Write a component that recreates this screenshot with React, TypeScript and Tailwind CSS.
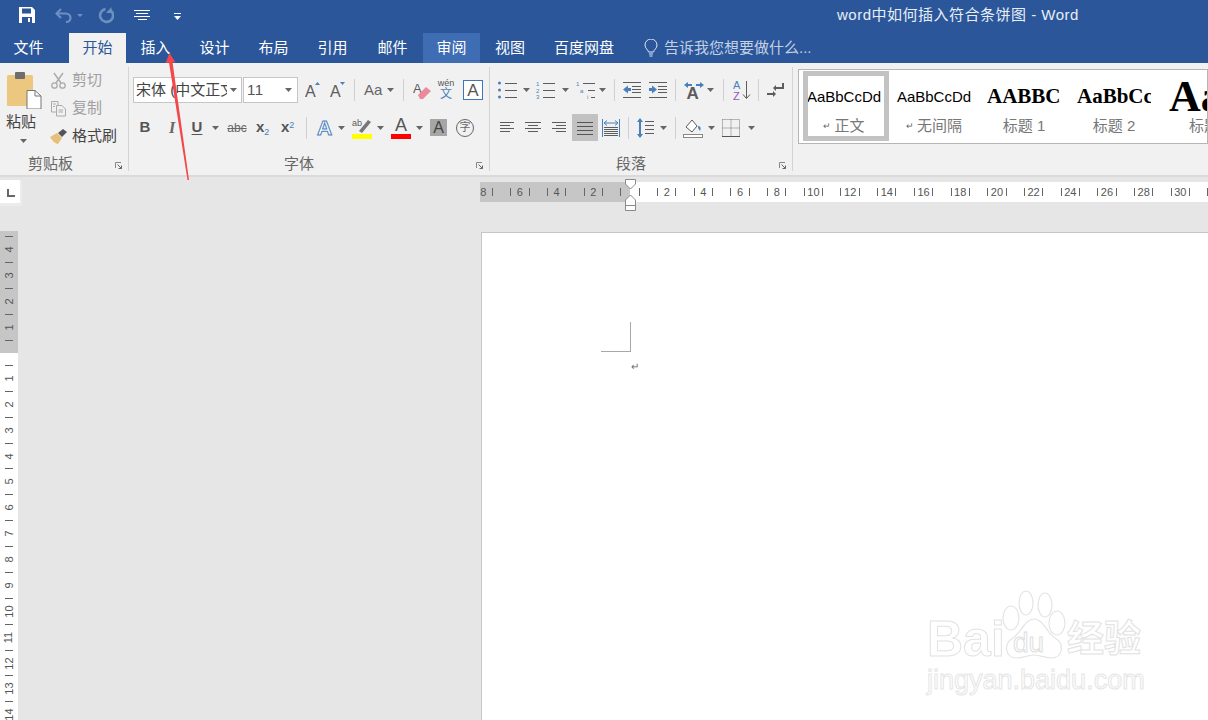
import type { ReactNode } from 'react'

// ---- small pieces -----------------------------------------------------------

const GRAY = '#5c5c5c'
const BLUE = '#4a7fbd'

function Ico({ w = 20, h = 20, className = '', children }: { w?: number, h?: number, className?: string, children: ReactNode }) {
  return (
    <svg width={w} height={h} viewBox={`0 0 ${w} ${h}`} fill="none" className={`shrink-0 ${className}`}>
      {children}
    </svg>
  )
}

function Caret({ className = '' }: { className?: string }) {
  return (
    <Ico w={7} h={4} className={className}>
      <path d="M0 0H7L3.5 4Z" fill="#666" />
    </Ico>
  )
}

function Sep({ className = '' }: { className?: string }) {
  return <span className={`shrink-0 w-px h-[22px] bg-[#d0d0d0] ${className}`} />
}

function Lines({ x, w, ys, color = GRAY }: { x: number | number[], w: number | number[], ys: number[], color?: string }) {
  return (
    <>
      {ys.map((y, i) => {
        const lx = Array.isArray(x) ? x[i] : x
        const lw = Array.isArray(w) ? w[i] : w
        return <rect key={i} x={lx} y={y} width={lw} height="1" fill={color} />
      })}
    </>
  )
}

function Launcher({ className = '' }: { className?: string }) {
  return (
    <Ico w={7} h={7} className={className}>
      <path d="M0.5 6V0.5H6" stroke="#888" />
      <path d="M2.5 2.5L6.5 6.5M6.5 3.5V6.5H3.5" stroke="#666" />
    </Ico>
  )
}

function GroupLabel({ children, className = '' }: { children: ReactNode, className?: string }) {
  return <span className={`text-[15px] leading-[16px] text-[#666] whitespace-nowrap ${className}`}>{children}</span>
}

// ---- title bar --------------------------------------------------------------

function TitleBar() {
  return (
    <div className="h-[33px] shrink-0 bg-[#2b579a] flex items-center">
      <Ico w={16} h={16} className="ml-[19px] -mt-[3px]">
        <path d="M0 0H13L16 3V16H0Z" fill="#fff" />
        <rect x="3" y="1.5" width="9" height="5" fill="#2b579a" />
        <rect x="3" y="10" width="10" height="6" fill="#2b579a" />
        <rect x="9" y="11" width="2" height="4" fill="#fff" />
      </Ico>
      <Ico w={17} h={15} className="ml-[20px] -mt-[3px]">
        <path d="M6 1L1.5 5.5L6 10" stroke="#6f8fbf" strokeWidth="2.2" />
        <path d="M2 5.5H10.5C14 5.5 15.5 8 15.5 10C15.5 12 14 14 11 14" stroke="#6f8fbf" strokeWidth="2.2" />
      </Ico>
      <Ico w={6} h={3} className="ml-[5px] -mt-[3px]">
        <path d="M0 0H6L3 3Z" fill="#6f8fbf" />
      </Ico>
      <Ico w={17} h={17} className="ml-[14px] -mt-[3px]">
        <path d="M13.5 3.2A6.5 6.5 0 1 1 8.5 2" stroke="#6f8fbf" strokeWidth="2.6" />
        <path d="M14.5 0V6H9" fill="#6f8fbf" />
      </Ico>
      <Ico w={16} h={11} className="ml-[20px] -mt-[3px]">
        <Lines x={[0, 2, 0, 4]} w={[16, 12, 16, 9]} ys={[0, 3, 6, 9]} color="#fff" />
      </Ico>
      <Ico w={7} h={7} className="ml-[24px] -mt-[1px]">
        <rect x="0" y="0" width="7" height="1" fill="#fff" />
        <path d="M0 3H7L3.5 7Z" fill="#fff" />
      </Ico>
      <span className="ml-[656px] -mt-[2px] text-[15px] tracking-[0.5px] text-[#e8eef7] whitespace-nowrap">word中如何插入符合条饼图 - Word</span>
    </div>
  )
}

// ---- tabs -------------------------------------------------------------------

function Tab({ label, className = 'w-[59px] text-white' }: { label: string, className?: string }) {
  return <div className={`h-full shrink-0 flex items-center justify-center text-[15px] ${className}`}>{label}</div>
}

function TabBar() {
  return (
    <div className="h-[30px] shrink-0 bg-[#2b579a] flex">
      <Tab label="文件" className="w-[57px] text-white" />
      <Tab label="开始" className="w-[57px] ml-[12px] bg-[#f1f1f1] text-[#2b579a]" />
      <Tab label="插入" />
      <Tab label="设计" />
      <Tab label="布局" />
      <Tab label="引用" />
      <Tab label="邮件" className="w-[61px] text-white" />
      <Tab label="审阅" className="w-[57px] bg-[#3e6db3] text-white" />
      <Tab label="视图" className="w-[60px] text-white" />
      <Tab label="百度网盘" className="w-[88px] text-white" />
      <div className="ml-[16px] flex items-center">
        <Ico w={14} h={18}>
          <path d="M4.5 13C4 10.5 1 9.5 1 6A6 6 0 0 1 13 6C13 9.5 10 10.5 9.5 13Z" stroke="#dfe7f2" />
          <path d="M5 15H9M5.5 17H8.5" stroke="#dfe7f2" />
        </Ico>
        <span className="ml-[6px] text-[15px] text-[#c3d0e4] whitespace-nowrap">告诉我您想要做什么...</span>
      </div>
    </div>
  )
}

// ---- clipboard group --------------------------------------------------------

function ClipboardGroup() {
  return (
    <div className="w-[128px] shrink-0 flex flex-col">
      <div className="flex h-[92px]">
        <div className="w-[50px] flex flex-col pl-[6px] pt-[8px]">
          <Ico w={36} h={38}>
            <rect x="1" y="4" width="26" height="31" rx="1.5" fill="#ecc77f" />
            <rect x="9" y="1" width="10" height="7" rx="1" fill="#6e6e6e" />
            <path d="M21 19.5H29L35 25V38H21Z" fill="#fff" stroke="#777" />
            <path d="M29 19.5V25H35" stroke="#777" />
          </Ico>
          <span className="mt-[3px] text-[15px] leading-[20px] text-[#444]">粘贴</span>
          <Caret className="mt-[7px] ml-[14px]" />
        </div>
        <div className="flex flex-col pt-[8px]">
          <div className="h-[18px] flex items-center">
            <Ico w={17} h={17}>
              <path d="M4 1L11 11M13 1L6 11" stroke="#aaa" strokeWidth="1.4" />
              <circle cx="4.5" cy="13.5" r="2.7" stroke="#aaa" strokeWidth="1.3" />
              <circle cx="12.5" cy="13.5" r="2.7" stroke="#aaa" strokeWidth="1.3" />
            </Ico>
            <span className="ml-[5px] text-[15px] text-[#a0a0a0]">剪切</span>
          </div>
          <div className="mt-[10px] h-[18px] flex items-center">
            <Ico w={17} h={17}>
              <path d="M1.5 1.5H8V12H1.5Z" stroke="#aaa" />
              <path d="M6.5 5.5H12L15.5 9V16H6.5Z" fill="#f1f1f1" stroke="#aaa" />
              <path d="M3 4H6M3 6.5H5M8.5 10H13M8.5 12H13" stroke="#aaa" />
            </Ico>
            <span className="ml-[5px] text-[15px] text-[#a0a0a0]">复制</span>
          </div>
          <div className="mt-[10px] h-[18px] flex items-center">
            <Ico w={17} h={15}>
              <path d="M0 8L7 4L12 9L8 15C5 15 2 11 0 8Z" fill="#e8bf78" />
              <path d="M8 4L13 0L17 3L12 8Z" fill="#555" />
            </Ico>
            <span className="ml-[5px] text-[15px] text-[#444]">格式刷</span>
          </div>
        </div>
      </div>
      <div className="flex items-center h-[16px] shrink-0 mt-[1px]">
        <GroupLabel className="ml-[28px]">剪贴板</GroupLabel>
        <Launcher className="ml-[42px] mt-[2px]" />
      </div>
    </div>
  )
}

// ---- font group -------------------------------------------------------------

function FontGroup() {
  return (
    <div className="w-[361px] shrink-0 flex flex-col border-l border-[#d4d4d4] my-[4px]">
      <div className="flex items-center h-[26px] shrink-0 mt-[10px]">
        <div className="ml-[4px] w-[109px] h-[26px] bg-white border border-[#c6c6c6] flex items-center overflow-hidden">
          <span className="w-[91px] ml-[2px] overflow-hidden whitespace-nowrap text-[15px] text-[#444]">宋体 (中文正文</span>
          <Caret className="ml-[3px]" />
        </div>
        <div className="w-[55px] ml-px h-[26px] bg-white border border-[#c6c6c6] flex items-center justify-between px-[3px]">
          <span className="text-[15px] tracking-[0.5px] text-[#555]">11</span>
          <Caret className="mr-[2px]" />
        </div>
        <Ico w={15} h={16} className="ml-[7px]">
          <text x="0" y="15" fontSize="16" fill={GRAY}>A</text>
          <path d="M10 3L12.5 0L15 3Z" fill={BLUE} />
        </Ico>
        <Ico w={15} h={16} className="ml-[10px]">
          <text x="0" y="15" fontSize="16" fill={GRAY}>A</text>
          <path d="M10 0H15L12.5 3Z" fill={BLUE} />
        </Ico>
        <Sep className="ml-[9px]" />
        <span className="ml-[9px] text-[15px] text-[#666] w-[18px]">Aa</span>
        <Caret className="ml-[5px]" />
        <Sep className="ml-[9px]" />
        <Ico w={18} h={19} className="ml-[9px]">
          <text x="0" y="12" fontSize="13" fill={GRAY}>A</text>
          <path d="M5 14L13 6L18 10L10 18H7Z" fill="#ec8a9a" />
        </Ico>
        <div className="ml-[7px] w-[16px] flex flex-col items-center leading-none">
          <span className="text-[9px] leading-[9px] text-[#555]">wén</span>
          <span className="text-[12px] leading-[13px] text-[#4a7fbd]">文</span>
        </div>
        <div className="ml-[9px] w-[20px] h-[20px] border border-[#3f76b5] bg-white flex items-center justify-center text-[17px] font-medium text-[#555] leading-none">A</div>
      </div>
      <div className="flex items-center h-[27px] shrink-0 mt-[11px]">
        <span className="ml-[10px] w-[12px] text-center text-[15px] font-bold text-[#555]">B</span>
        <span className="ml-[15px] w-[12px] text-center font-['Liberation_Serif',serif] text-[16px] font-bold italic text-[#666]">I</span>
        <span className="ml-[13px] w-[12px] text-center text-[15px] font-bold text-[#555] underline underline-offset-2">U</span>
        <Caret className="ml-[9px]" />
        <span className="ml-[8px] w-[20px] text-center text-[12px] text-[#666] line-through">abc</span>
        <span className="ml-[9px] w-[16px] text-[15px] font-bold text-[#555]">x<sub className="text-[9px] font-normal text-[#4a7fbd]">2</sub></span>
        <span className="ml-[9px] w-[16px] text-[15px] font-bold text-[#555]">x<sup className="text-[9px] font-normal text-[#4a7fbd]">2</sup></span>
        <Sep className="ml-[9px]" />
        <span className="ml-[9px] w-[17px] text-center text-[21px] text-[#fff] font-bold [-webkit-text-stroke:1px_#4a7fbd] leading-none">A</span>
        <Caret className="ml-[5px]" />
        <div className="ml-[7px] w-[20px] h-[22px] flex flex-col items-center">
          <Ico w={20} h={17}>
            <text x="0" y="9" fontSize="9" fill={GRAY}>ab</text>
            <path d="M7 14L16 3L19 5L10 16Z" fill="#777" />
          </Ico>
          <span className="w-[20px] h-[5px] bg-[#ffff00]" />
        </div>
        <Caret className="ml-[5px]" />
        <div className="ml-[7px] w-[20px] h-[22px] flex flex-col items-center">
          <span className="h-[17px] text-[18px] leading-[17px] font-medium text-[#555]">A</span>
          <span className="w-[20px] h-[5px] bg-[#ff0000]" />
        </div>
        <Caret className="ml-[5px]" />
        <span className="ml-[7px] w-[17px] h-[17px] bg-[#a6a6a6] flex items-center justify-center text-[16px] leading-none font-medium text-[#444]">A</span>
        <span className="ml-[9px] w-[18px] h-[18px] rounded-full border border-[#666] flex items-center justify-center text-[11px] leading-none text-[#666]">字</span>
      </div>
      <div className="flex items-center h-[16px] shrink-0 mt-[15px]">
        <GroupLabel className="ml-[155px]">字体</GroupLabel>
        <Launcher className="ml-[162px] mt-[2px]" />
      </div>
    </div>
  )
}

// ---- paragraph group --------------------------------------------------------

function ParagraphGroup() {
  return (
    <div className="w-[304px] shrink-0 flex flex-col border-x border-[#d4d4d4] my-[4px]">
      <div className="flex items-center h-[26px] shrink-0 mt-[10px]">
        <Ico w={19} h={18} className="ml-[8px]">
          <circle cx="1.5" cy="2" r="1.5" fill={BLUE} />
          <circle cx="1.5" cy="9" r="1.5" fill={BLUE} />
          <circle cx="1.5" cy="16" r="1.5" fill={BLUE} />
          <Lines x={7} w={12} ys={[2, 9, 16]} />
        </Ico>
        <Caret className="ml-[6px]" />
        <Ico w={20} h={18} className="ml-[6px]">
          <text x="0" y="5" fontSize="6" fill={BLUE}>1</text>
          <text x="0" y="12" fontSize="6" fill={BLUE}>2</text>
          <text x="0" y="18" fontSize="6" fill={BLUE}>3</text>
          <Lines x={7} w={12} ys={[2, 9, 16]} />
        </Ico>
        <Caret className="ml-[6px]" />
        <Ico w={20} h={18} className="ml-[7px]">
          <text x="0" y="5" fontSize="6" fill={BLUE}>1</text>
          <text x="4" y="12" fontSize="6" fill={BLUE}>a</text>
          <text x="11" y="18" fontSize="6" fill={BLUE}>i</text>
          <Lines x={[7, 12, 15]} w={[12, 7, 4]} ys={[2, 9, 16]} />
        </Ico>
        <Caret className="ml-[3px]" />
        <Sep className="ml-[8px]" />
        <Ico w={18} h={16} className="ml-[8px]">
          <Lines x={[0, 9, 9, 9, 0]} w={[18, 9, 9, 9, 18]} ys={[0, 4, 7, 10, 15]} />
          <path d="M0 7.5L5 3.5V6H8V9H5V11.5Z" fill={BLUE} />
        </Ico>
        <Ico w={18} h={16} className="ml-[8px]">
          <Lines x={[0, 9, 9, 9, 0]} w={[18, 9, 9, 9, 18]} ys={[0, 4, 7, 10, 15]} />
          <path d="M8 7.5L3 3.5V6H0V9H3V11.5Z" fill={BLUE} />
        </Ico>
        <Sep className="ml-[8px]" />
        <Ico w={20} h={17} className="ml-[8px]">
          <path d="M0 3L4 0V2H8V4H4V6ZM20 3L16 0V2H12V4H16V6Z" fill={BLUE} />
          <text x="2.5" y="17" fontSize="17" fontWeight="bold" fill={GRAY}>A</text>
        </Ico>
        <Caret className="ml-[3px]" />
        <Sep className="ml-[9px]" />
        <Ico w={19} h={20} className="ml-[9px]">
          <text x="0" y="9" fontSize="11" fill={BLUE}>A</text>
          <text x="0" y="19.5" fontSize="11" fill="#8e5bb5">Z</text>
          <path d="M13.5 1V18M10 14.5L13.5 18.5L17 14.5" stroke={GRAY} />
        </Ico>
        <Sep className="ml-[6px]" />
        <Ico w={17} h={14} className="ml-[8px]">
          <path d="M16 0V5H8" stroke={GRAY} strokeWidth="2" />
          <path d="M6 5L9 2V8Z" fill={GRAY} />
          <path d="M0 11H6" stroke={GRAY} strokeWidth="2" />
          <path d="M6 8L9 11L6 14Z" fill={GRAY} />
        </Ico>
      </div>
      <div className="flex items-center h-[27px] shrink-0 mt-[11px]">
        <Ico w={14} h={11} className="ml-[10px]">
          <Lines x={0} w={[14, 10, 14, 10]} ys={[0, 3, 6, 9]} />
        </Ico>
        <Ico w={16} h={11} className="ml-[11px]">
          <Lines x={[0, 3, 0, 3]} w={[16, 10, 16, 10]} ys={[0, 3, 6, 9]} />
        </Ico>
        <Ico w={14} h={11} className="ml-[11px]">
          <Lines x={[0, 4, 0, 4]} w={[14, 10, 14, 10]} ys={[0, 3, 6, 9]} />
        </Ico>
        <div className="ml-[6px] w-[26px] h-[27px] bg-[#c2c2c2] flex items-center justify-center">
          <Ico w={16} h={14}>
            <Lines x={0} w={16} ys={[1, 5, 9, 13]} color="#555" />
          </Ico>
        </div>
        <Ico w={18} h={18} className="ml-[4px]">
          <path d="M0.5 0V18M17.5 0V18" stroke={BLUE} />
          <path d="M2 4H16M2 4L5 1.5M2 4L5 6.5M16 4L13 1.5M16 4L13 6.5" stroke={BLUE} />
          <Lines x={2} w={14} ys={[8, 10, 12, 14, 16]} />
        </Ico>
        <Sep className="ml-[8px]" />
        <Ico w={17} h={20} className="ml-[8px]">
          <path d="M3 0L6 4H4V16H6L3 20L0 16H2V4H0Z" fill={BLUE} />
          <Lines x={8} w={9} ys={[3, 7, 11, 15]} />
        </Ico>
        <Caret className="ml-[6px]" />
        <Sep className="ml-[8px]" />
        <Ico w={20} h={20} className="ml-[7px]">
          <path d="M3 9L9 2L14 8L9 14Z" fill="#fff" stroke={GRAY} />
          <path d="M15 8C18 8 18 11 17 13C16 11 15 11 15 8Z" fill={BLUE} />
          <rect x="0.5" y="16.5" width="19" height="3" fill="#fff" stroke="#888" />
        </Ico>
        <Caret className="ml-[5px]" />
        <Ico w={18} h={18} className="ml-[7px]">
          <path d="M0.5 0.5H17.5V17M0.5 0.5V17M9 0.5V17M0.5 9H17.5" stroke="#777" strokeDasharray="1 1" />
          <path d="M0 17.5H18" stroke="#555" />
        </Ico>
        <Caret className="ml-[8px]" />
      </div>
      <div className="flex items-center h-[16px] shrink-0 mt-[15px]">
        <GroupLabel className="ml-[126px]">段落</GroupLabel>
        <Launcher className="ml-[133px] mt-[2px]" />
      </div>
    </div>
  )
}

// ---- styles gallery ---------------------------------------------------------

function StyleItem({ preview, label, mark, selected, className = '' }: { preview: ReactNode, label: string, mark?: boolean, selected?: boolean, className?: string }) {
  return (
    <div className={`h-[70px] shrink-0 flex flex-col overflow-hidden bg-white ${selected ? 'border-[5px] border-[#c3c3c3] pt-[7px]' : 'pt-[12px]'} ${className}`}>
      <div className="h-[28px] flex items-center whitespace-nowrap">{preview}</div>
      <div className="mt-[7px] flex items-center text-[15px] leading-[16px] text-[#777] whitespace-nowrap">
        {mark && <span className="mr-[3px] text-[9px] text-[#666]">↵</span>}
        {label}
      </div>
    </div>
  )
}

function StylesGallery() {
  return (
    <div className="ml-[5px] mt-[6px] h-[75px] flex-1 min-w-0 bg-white border border-[#b5b5b5] flex items-start overflow-hidden pl-[4px] pt-px">
      <StyleItem selected mark label="正文" className="w-[86px] items-center pr-[4px]" preview={<span className="text-[15px] text-black">AaBbCcDd</span>} />
      <StyleItem mark label="无间隔" className="w-[90px] items-center" preview={<span className="text-[15px] text-black">AaBbCcDd</span>} />
      <StyleItem label="标题 1" className="w-[90px] items-center" preview={<span className="w-[74px] overflow-hidden font-['Liberation_Serif',serif] text-[21px] font-bold text-black">AABBCC</span>} />
      <StyleItem label="标题 2" className="w-[90px] items-center" preview={<span className="w-[74px] overflow-hidden font-['Liberation_Serif',serif] text-[21px] font-bold text-black">AaBbCcDd</span>} />
      <StyleItem label="标题" className="w-[90px] items-start pl-[30px]" preview={<span className="-ml-[20px] font-['Liberation_Serif',serif] text-[44px] font-bold text-black">Aa</span>} />
    </div>
  )
}

// ---- rulers -----------------------------------------------------------------

function HMarks({ count, reverse }: { count: number, reverse?: boolean }) {
  const marks = Array.from({ length: count }, (_, k) => k + 1)
  return (
    <div className={`h-full flex items-center ${reverse ? 'flex-row-reverse pr-[4.6px]' : 'pl-[4.6px]'}`}>
      {marks.map(i => (
        <div key={i} className="w-[9.18px] shrink-0 flex justify-center text-[11px] leading-none text-[#555]">
          {i % 2 === 1 && <span className="shrink-0 w-px h-[8px] bg-[#666]" />}
          {i % 4 === 0 && <span className="shrink-0">{i / 2}</span>}
        </div>
      ))}
    </div>
  )
}

function VMarks({ count, reverse }: { count: number, reverse?: boolean }) {
  const marks = Array.from({ length: count }, (_, k) => k + 1)
  return (
    <div className={`w-full flex items-center ${reverse ? 'flex-col-reverse pb-[6.5px] h-full' : 'flex-col pt-[6px]'}`}>
      {marks.map(i => (
        <div key={i} className="h-[12.95px] shrink-0 w-full flex items-center justify-center text-[11px] leading-none text-[#555]">
          {i % 2 === 1 && <span className="shrink-0 h-px w-[8px] bg-[#666]" />}
          {i % 2 === 0 && <span className="shrink-0 -rotate-90 whitespace-nowrap">{i / 2}</span>}
        </div>
      ))}
    </div>
  )
}

function RulerRow() {
  return (
    <div className="h-[54px] shrink-0 flex items-start relative">
      <div className="mt-[3px] w-[22px] h-[26px] bg-[#ececec] pr-[2px] pb-[3px]">
        <div className="w-full h-full bg-white flex items-center justify-center">
          <span className="mt-[3px] ml-[2px] w-[8px] h-[8px] border-l-2 border-b-2 border-[#666]" />
        </div>
      </div>
      <div className="ml-[458px] mt-[5px] w-[150px] h-[20px] bg-[#c6c6c6] overflow-hidden">
        <HMarks count={16} reverse />
      </div>
      <div className="mt-[5px] flex-1 h-[20px] bg-white overflow-hidden">
        <HMarks count={64} />
      </div>
      <Ico w={12} h={32} className="absolute left-[625px] top-[2px]">
        <path d="M0.5 0.5H10.5V5L5.5 10L0.5 5Z" fill="#fff" stroke="#8a8a8a" />
        <path d="M5.5 16L10.5 21V31.5H0.5V21Z" fill="#fff" stroke="#8a8a8a" />
        <path d="M0.5 26.5H10.5" stroke="#8a8a8a" />
      </Ico>
    </div>
  )
}

// ---- watermark and arrow ----------------------------------------------------

function Watermark() {
  return (
    <div className="absolute left-[925px] top-[588px] w-[225px] h-[110px] text-white">
      <Ico w={70} h={76} className="absolute left-[76px] top-0">
        <g stroke="#e4e4e4" strokeWidth="1.2" fill="#fff">
          <ellipse cx="10" cy="30" rx="8" ry="12" />
          <ellipse cx="25" cy="15" rx="7" ry="12" />
          <ellipse cx="44" cy="17" rx="7" ry="12" />
          <ellipse cx="56" cy="35" rx="8" ry="12" />
          <path d="M33 31C24 31 20 45 12 50C2 56 4 70 16 70C22 70 26 67 33 67C40 67 44 70 50 70C62 70 64 56 54 50C46 45 42 31 33 31Z" />
        </g>
      </Ico>
      <span className="absolute left-[2px] top-[26px] text-[50px] leading-[50px] font-bold [-webkit-text-stroke:1px_#e2e2e2]">Bai</span>
      <span className="absolute left-[88px] top-[40px] text-[28px] leading-[30px] [-webkit-text-stroke:1px_#dedede]">du</span>
      <span className="absolute left-[142px] top-[30px] text-[37px] leading-[44px] font-bold whitespace-nowrap [-webkit-text-stroke:1px_#e2e2e2]">经验</span>
      <span className="absolute left-[2px] top-[76px] text-[27px] leading-[32px] whitespace-nowrap [-webkit-text-stroke:1px_#e6e6e6]">jingyan.baidu.com</span>
    </div>
  )
}

function RedArrow() {
  return (
    <svg width="30" height="135" viewBox="160 50 30 135" className="absolute left-[160px] top-[50px]">
      <path d="M169.5 53L175.5 62.5L172.5 62L189 180L187.5 180L169 62.5L165.5 63Z" fill="#f4474a" />
    </svg>
  )
}

// ---- main page --------------------------------------------------------------

export default function App() {
  return (
    <div className="relative w-[1208px] h-[720px] overflow-hidden flex flex-col bg-[#e6e6e6] font-['Liberation_Sans','Noto_Sans_CJK_SC',sans-serif]">
      <TitleBar />
      <TabBar />
      <div className="h-[114px] shrink-0 bg-[#f1f1f1] border-b-2 border-[#dadada] flex">
        <ClipboardGroup />
        <FontGroup />
        <ParagraphGroup />
        <StylesGallery />
      </div>
      <RulerRow />
      <div className="flex-1 min-h-0 flex">
        <div className="w-[18px] shrink-0 flex flex-col">
          <div className="h-[122px] shrink-0 bg-[#c6c6c6] overflow-hidden">
            <VMarks count={9} reverse />
          </div>
          <div className="flex-1 min-h-0 bg-white overflow-hidden">
            <VMarks count={29} />
          </div>
        </div>
        <div className="ml-[463px] mt-px flex-1 bg-white border-l border-t border-[#c6c6c6] pt-[89px] pl-[119px]">
          <div className="w-[30px] h-[30px] border-r border-b border-[#a8a8a8]" />
          <div className="ml-[30px] mt-[8px] text-[10px] leading-[14px] text-[#666]">↵</div>
        </div>
      </div>
      <Watermark />
      <RedArrow />
    </div>
  )
}
